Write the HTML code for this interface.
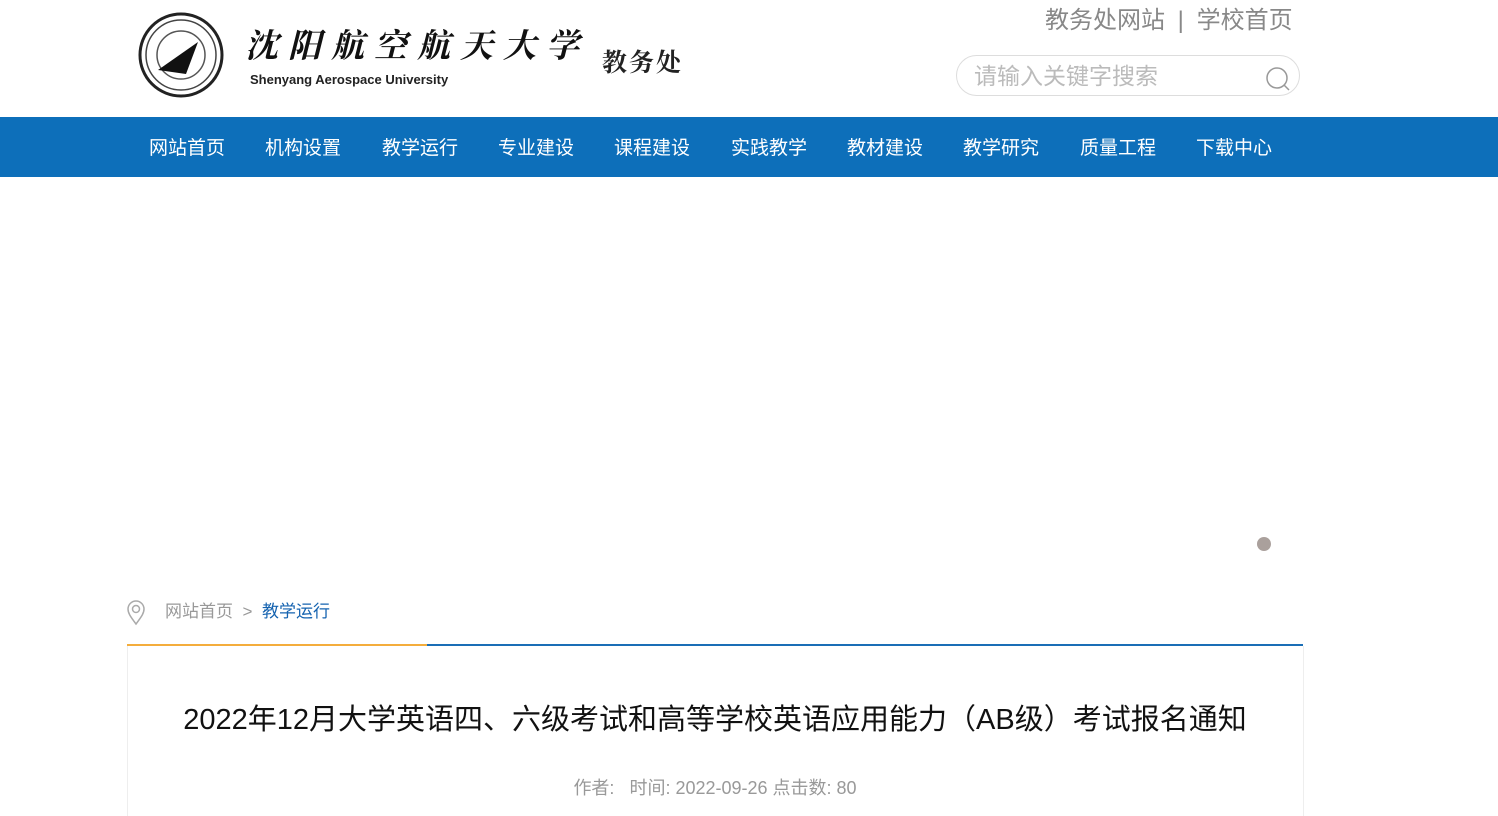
<!DOCTYPE html>
<html><head><meta charset="utf-8"><style>
body{margin:0;width:1498px;height:813px;overflow:hidden;background:#fff;font-family:"Liberation Sans","Noto Sans CJK SC",sans-serif;position:relative}
.a{position:absolute}
.nav{top:117px;left:0;width:1498px;height:60px;background:#0d6fba}
.nav span{position:absolute;top:20px;color:#fff;font-size:19px;line-height:24px}
</style></head><body>
<svg class="a" style="left:138px;top:12px" width="86" height="86" viewBox="0 0 86 86">
<circle cx="43" cy="43" r="41" fill="none" stroke="#222" stroke-width="3"/>
<circle cx="43" cy="43" r="35" fill="none" stroke="#444" stroke-width="1.5"/>
<circle cx="43" cy="43" r="24" fill="none" stroke="#555" stroke-width="1.5"/>
<path d="M20 58 L60 30 L48 62 Z" fill="#111"/>
</svg>
<div class="a" style="left:245px;top:22px;font-family:'Noto Serif CJK SC',serif;font-size:33px;line-height:44px;font-weight:bold;letter-spacing:10px;color:#111;font-style:italic">沈阳航空航天大学</div>
<div class="a" style="left:250px;top:72px;font-size:13px;font-weight:bold;color:#222">Shenyang Aerospace University</div>
<div class="a" style="left:602px;top:45px;font-family:'Noto Serif CJK SC',serif;font-size:25px;line-height:32px;font-weight:bold;color:#222;letter-spacing:2px">教务处</div>
<div class="a" style="left:1045px;top:3px;font-size:24px;line-height:36px;color:#888">教务处网站 <span style="margin:0 6px">|</span> 学校首页</div>
<div class="a" style="left:956px;top:55px;width:344px;height:41px;border:1px solid #ddd;border-radius:21px;box-sizing:border-box"></div>
<div class="a" style="left:974px;top:58px;font-size:23px;line-height:36px;color:#bbb">请输入关键字搜索</div>
<svg class="a" style="left:1265px;top:66px" width="26" height="26"><circle cx="12" cy="12" r="10" fill="none" stroke="#999" stroke-width="1.5"/><path d="M19 19 L24 24" stroke="#999" stroke-width="1.5"/></svg>
<div class="a nav">
<span style="left:149px">网站首页</span><span style="left:265px">机构设置</span><span style="left:382px">教学运行</span><span style="left:498px">专业建设</span><span style="left:614px">课程建设</span><span style="left:731px">实践教学</span><span style="left:847px">教材建设</span><span style="left:963px">教学研究</span><span style="left:1080px">质量工程</span><span style="left:1196px">下载中心</span>
</div>
<div class="a" style="left:1257px;top:537px;width:14px;height:14px;border-radius:50%;background:#aaa09c"></div>
<svg class="a" style="left:126px;top:600px" width="20" height="26"><path d="M10 24 C4 16 2 13 2 9 A8 8 0 0 1 18 9 C18 13 16 16 10 24Z" fill="none" stroke="#aaa" stroke-width="1.5"/><circle cx="10" cy="9" r="3.5" fill="none" stroke="#aaa" stroke-width="1.5"/></svg>
<div class="a" style="left:165px;top:600px;font-size:17px;line-height:24px;color:#999">网站首页 &nbsp;&gt;</div>
<div class="a" style="left:262px;top:600px;font-size:17px;line-height:24px;color:#1563b0">教学运行</div>
<div class="a" style="left:127px;top:644px;width:300px;height:2px;background:#f4ad3c"></div>
<div class="a" style="left:427px;top:644px;width:876px;height:2px;background:#1a6eb6"></div>
<div class="a" style="left:127px;top:646px;width:1175px;height:170px;border-left:1px solid #eee;border-right:1px solid #eee"></div>
<div class="a" style="left:0;width:1430px;text-align:center;top:700px;font-size:29px;line-height:40px;color:#111">2022年12月大学英语四、六级考试和高等学校英语应用能力（AB级）考试报名通知</div>
<div class="a" style="left:0;width:1430px;text-align:center;top:776px;font-size:18px;line-height:24px;color:#999">作者:&nbsp;&nbsp; 时间:&nbsp;2022-09-26 点击数:&nbsp;80</div>
</body></html>
